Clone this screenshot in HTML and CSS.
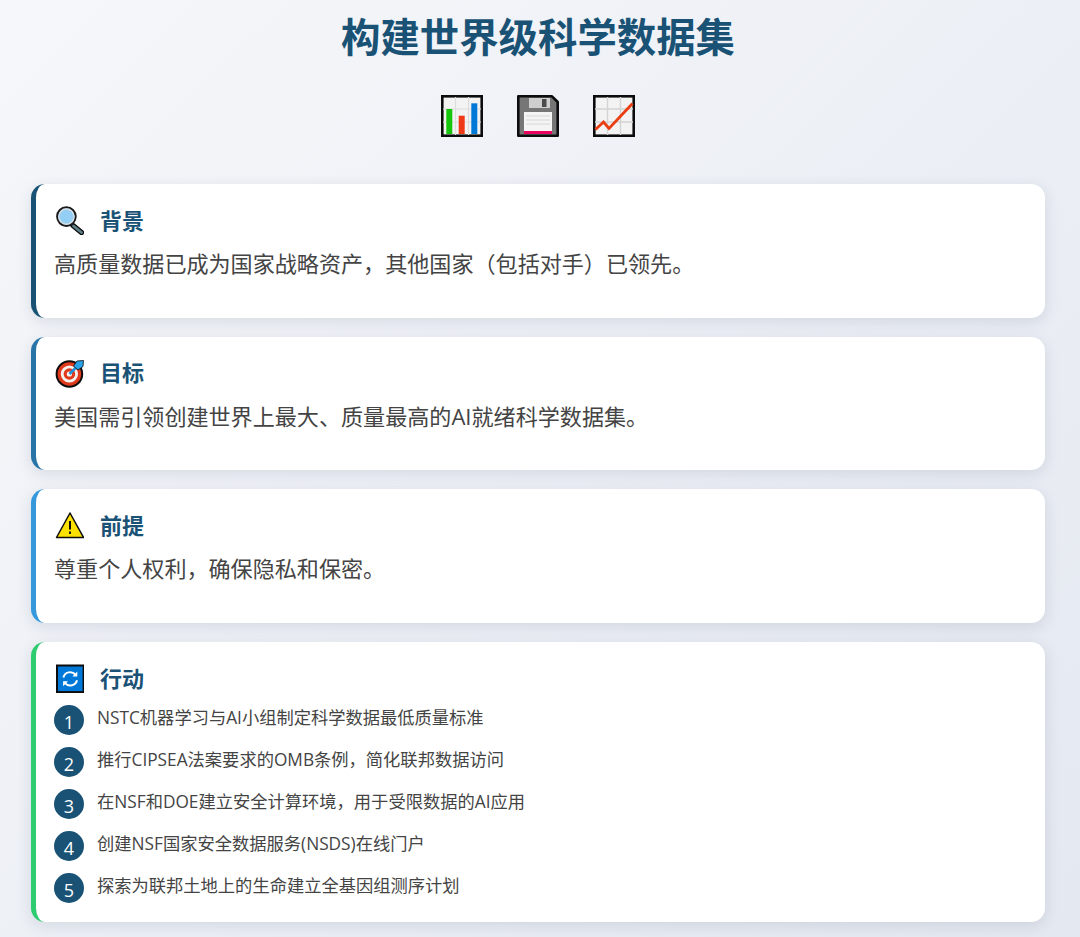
FILE: index.html
```html
<!DOCTYPE html>
<html lang="zh-CN">
<head>
<meta charset="utf-8">
<title>构建世界级科学数据集</title>
<link rel="stylesheet" href="styles.css">
</head>
<body>
<header class="page-head">
  <h1 class="page-title">构建世界级科学数据集</h1>
  <div class="hero-icons">
    <svg class="hero-icon" viewBox="0 0 42 42">
      <rect x="1.3" y="1.3" width="39.4" height="39.4" fill="#f3f3f3" stroke="#0c0c0c" stroke-width="2.6"/>
      <path d="M14.5 2v38M27.5 2v38M2 14h38M2 27h38" stroke="#dcdcdc" stroke-width="1.2" fill="none"/>
      <rect x="5.3" y="14" width="6" height="25" fill="#16c60c"/>
      <rect x="17.7" y="20.7" width="6" height="18.3" fill="#f03a17"/>
      <rect x="30.3" y="8.3" width="6" height="30.7" fill="#0078d7"/>
    </svg>
    <svg class="hero-icon" viewBox="0 0 42 42">
      <path d="M1.3 1.3H35L40.7 7V40.7H1.3Z" fill="#767676" stroke="#0c0c0c" stroke-width="2.6" stroke-linejoin="round"/>
      <rect x="12" y="3" width="21" height="10" fill="#cfcfcf"/>
      <rect x="25" y="4" width="4.5" height="8" fill="#4c4a48"/>
      <rect x="7" y="17" width="28" height="19.5" fill="#f4f4f4"/>
      <path d="M9 21h24M9 25h24M9 29h24" stroke="#d6d6d6" stroke-width="1" fill="none"/>
      <rect x="7" y="36" width="28" height="3" fill="#ea005e"/>
    </svg>
    <svg class="hero-icon" viewBox="0 0 42 42">
      <rect x="1.3" y="1.3" width="39.4" height="39.4" fill="#f3f3f3" stroke="#0c0c0c" stroke-width="2.6"/>
      <path d="M14.5 2v38M27.5 2v38M2 14h38M2 27h38" stroke="#d4d4d4" stroke-width="1.4" fill="none"/>
      <path d="M2.5 34.5 10.5 27 16 33.5 39.5 8.5" stroke="#ea3e12" stroke-width="2.8" fill="none" stroke-linejoin="miter"/>
    </svg>
  </div>
</header>

<main class="cards">
  <section class="card card-navy">
    <div class="card-head">
      <svg class="card-icon" viewBox="0 0 30 30">
        <path d="M19 20.5 27.5 27.5" stroke="#0c0c0c" stroke-width="5.4" stroke-linecap="round"/>
        <path d="M19.5 21 27.5 27.5" stroke="#5f7f88" stroke-width="2.8" stroke-linecap="round"/>
        <circle cx="12.4" cy="11.6" r="9.3" fill="#93cff5" stroke="#1a1a1a" stroke-width="2"/>
        <circle cx="12.4" cy="11.6" r="7.6" fill="none" stroke="#d7dde0" stroke-width="1.4"/>
      </svg>
      <h2 class="card-title">背景</h2>
    </div>
    <p class="card-text">高质量数据已成为国家战略资产，其他国家（包括对手）已领先。</p>
  </section>

  <section class="card card-blue">
    <div class="card-head">
      <svg class="card-icon" viewBox="0 0 30 30">
        <circle cx="15.4" cy="16" r="12.8" fill="#e03a1e" stroke="#0c0c0c" stroke-width="2"/>
        <circle cx="15.4" cy="16" r="8.6" fill="#f7f3f0"/>
        <circle cx="15.4" cy="16" r="5.8" fill="#e03a1e"/>
        <circle cx="15.4" cy="16" r="2.6" fill="#f7f3f0"/>
        <path d="M15.5 16 23 8.5" stroke="#1e8fd8" stroke-width="2.6"/>
        <path d="M19.5 8 23 3 29.5 2.5 29 8.5 24 12Z" fill="#29a3e8" stroke="#0c0c0c" stroke-width="0.8"/>
      </svg>
      <h2 class="card-title">目标</h2>
    </div>
    <p class="card-text">美国需引领创建世界上最大、质量最高的AI就绪科学数据集。</p>
  </section>

  <section class="card card-sky">
    <div class="card-head">
      <svg class="card-icon" viewBox="0 0 30 30">
        <path d="M16 3 29.5 27.5H2.5Z" fill="#fce100" stroke="#0c0c0c" stroke-width="1.5" stroke-linejoin="round"/>
        <rect x="15" y="11" width="2" height="8.5" fill="#0c0c0c"/>
        <rect x="15" y="21.5" width="2" height="2.4" fill="#0c0c0c"/>
      </svg>
      <h2 class="card-title">前提</h2>
    </div>
    <p class="card-text">尊重个人权利，确保隐私和保密。</p>
  </section>

  <section class="card card-green">
    <div class="card-head">
      <svg class="card-icon" viewBox="0 0 30 30">
        <rect x="3" y="2.5" width="26.6" height="26.6" fill="#0078d7" stroke="#0c0c0c" stroke-width="2"/>
        <path d="M9.4 14.5A7 7 0 0 1 21.4 11.5M23 17.2A7 7 0 0 1 11 20.2" stroke="#fff" stroke-width="2" fill="none"/>
        <path d="M23.3 8.5V13.4H18.4ZM9.1 23.2V18.3H14Z" fill="#fff"/>
      </svg>
      <h2 class="card-title">行动</h2>
    </div>
    <ol class="steps">
      <li class="step"><span class="step-num">1</span><span class="step-text">NSTC机器学习与AI小组制定科学数据最低质量标准</span></li>
      <li class="step"><span class="step-num">2</span><span class="step-text">推行CIPSEA法案要求的OMB条例，简化联邦数据访问</span></li>
      <li class="step"><span class="step-num">3</span><span class="step-text">在NSF和DOE建立安全计算环境，用于受限数据的AI应用</span></li>
      <li class="step"><span class="step-num">4</span><span class="step-text">创建NSF国家安全数据服务(NSDS)在线门户</span></li>
      <li class="step"><span class="step-num">5</span><span class="step-text">探索为联邦土地上的生命建立全基因组测序计划</span></li>
    </ol>
  </section>
</main>
</body>
</html>
```

FILE: styles.css
```css
* {
  box-sizing: border-box;
}

html {
  height: 100%;
}

body {
  margin: 0;
  min-height: 100%;
  padding: 10px 35px 14px 31px;
  background: linear-gradient(135deg, #f5f7fa 0%, #e4e8f0 100%);
  font-family: "Open Sans", "Noto Sans CJK SC", sans-serif;
  color: #444;
  text-spacing-trim: space-all;
}

.page-head {
  text-align: center;
}

.page-title {
  margin: 0;
  font-size: 39.4px;
  line-height: 54px;
  font-weight: 700;
  color: #1a5276;
}

.hero-icons {
  display: flex;
  justify-content: center;
  gap: 34px;
  margin-top: 31px;
}

.hero-icon {
  display: block;
  width: 42px;
  height: 42px;
}

.cards {
  display: flex;
  flex-direction: column;
  gap: 19px;
  margin-top: 47px;
}

.card {
  background: #fff;
  border-left: 5px solid #1a5276;
  border-radius: 14px;
  padding: 20px 20px 20px 18px;
  box-shadow: 0 4px 15px rgba(30, 50, 90, 0.12);
}

.card-navy {
  border-left-color: #1a5276;
}

.card-blue {
  border-left-color: #2874a6;
}

.card-sky {
  border-left-color: #3498db;
}

.card-green {
  border-left-color: #2ecc71;
  padding-bottom: 19px;
}

.card-head {
  display: flex;
  align-items: center;
  gap: 16px;
  height: 32px;
}

.card-icon {
  display: block;
  flex: none;
  width: 30px;
  height: 30px;
}

.card-title {
  margin: 0;
  font-size: 22px;
  line-height: 31px;
  font-weight: 700;
  color: #1a5276;
}

.card-text {
  margin: 10px 0 0;
  min-height: 51.7px;
  font-size: 22.08px;
  line-height: 35px;
  color: #444;
}

.steps {
  list-style: none;
  margin: 11px 0 0;
  padding: 0;
  display: flex;
  flex-direction: column;
  gap: 12.1px;
}

.step {
  display: flex;
  align-items: flex-start;
  gap: 13px;
  height: 30px;
  font-size: 17.28px;
  color: #444;
}

.step-text {
  line-height: 26px;
}

.step-num {
  flex: none;
  display: flex;
  align-items: center;
  justify-content: center;
  width: 30px;
  height: 30px;
  padding-top: 3px;
  border-radius: 50%;
  background: #1a5276;
  color: #fff;
  font-size: 18px;
}
```
